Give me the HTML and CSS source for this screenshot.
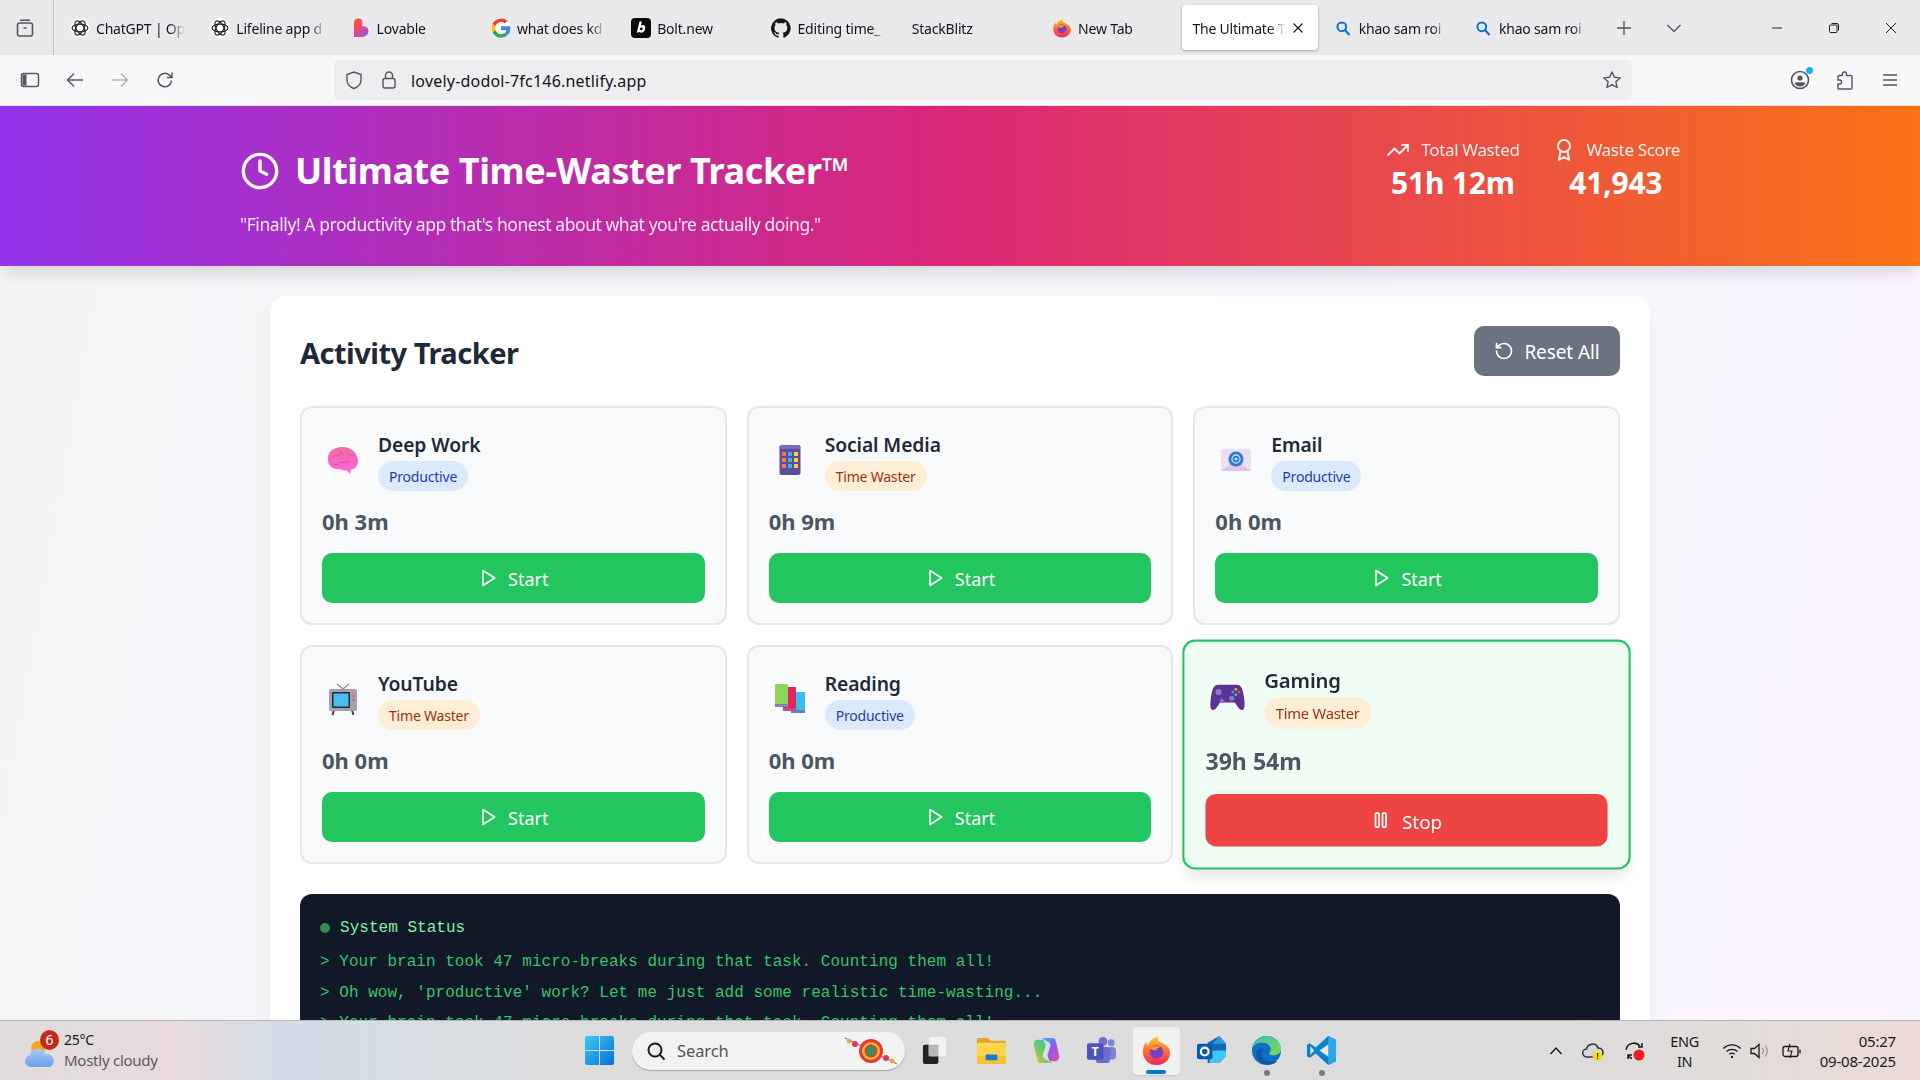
FILE: index.html
```html
<!DOCTYPE html>
<html lang="en">
<head>
<meta charset="utf-8">
<title>The Ultimate Time-Waster Tracker</title>
<link rel="stylesheet" href="styles.css">
</head>
<body>
<svg class="defs" width="0" height="0" aria-hidden="true">
  <defs>
    <symbol id="i-play" viewBox="0 0 24 24"><polygon points="6 3 20 12 6 21" fill="none" stroke="currentColor" stroke-width="2" stroke-linejoin="round"/></symbol>
    <symbol id="i-pause" viewBox="0 0 24 24"><g fill="none" stroke="currentColor" stroke-width="2"><rect x="6" y="4" width="4" height="16" rx="1"/><rect x="14" y="4" width="4" height="16" rx="1"/></g></symbol>
    <symbol id="i-knot" viewBox="0 0 24 24"><circle cx="12" cy="12" r="12" fill="#fff"/><g fill="none" stroke="currentColor" stroke-width="1.400"><ellipse cx="12" cy="12" rx="9.500" ry="4.600"/><ellipse cx="12" cy="12" rx="9.500" ry="4.600" transform="rotate(60 12 12)"/><ellipse cx="12" cy="12" rx="9.500" ry="4.600" transform="rotate(120 12 12)"/></g></symbol>
    <symbol id="i-lens" viewBox="0 0 20 20"><circle cx="8.800" cy="8.800" r="4.400" fill="none" stroke="#0b6fd6" stroke-width="2"/><path d="M12 12l4 4.400" stroke="#0b6fd6" stroke-width="2.200" stroke-linecap="round"/></symbol>
    <linearGradient id="g-fox" x1="0" y1="0" x2="0" y2="1"><stop offset="0" stop-color="#ffd02e"/><stop offset=".45" stop-color="#ff7a2a"/><stop offset="1" stop-color="#f0285a"/></linearGradient>
    <symbol id="i-fox" viewBox="0 0 32 32"><path d="M16 31C7.500 31 2 24.700 2 17c0-4 1.300-7.500 3.500-10 .1 1.800.7 3 1.700 3.800C8.500 6.500 12 3.500 17.500 1c-1 3.500.2 5.500 3 6.800C25.600 10 30 13 30 18c0 7.500-6 13-14 13z" fill="url(#g-fox)"/><circle cx="16" cy="17.500" r="7" fill="#7b3fc4"/><path d="M9 14c3-3 8-3.500 12-1.500-3 .2-4.500 1.500-5 3-2 .5-4.500 0-7-1.500z" fill="#ff9a2e"/></symbol>
  </defs>
</svg>

<div class="desktop">
  <div class="tabstrip">
    <div class="tab-manager">
      <svg viewBox="0 0 20 20" width="20" height="20" fill="none" stroke="#55555c" stroke-width="1.600"><rect x="2.500" y="5" width="15" height="13" rx="2"/><path d="M5 2.200h10M8.500 10h3"/></svg>
    </div>
    <div class="tabs">
      <div class="tab"><svg class="fav" viewBox="0 0 24 24" color="#222"><use href="#i-knot"/></svg><span class="tab-text">ChatGPT | Op</span></div>
      <div class="tab"><svg class="fav" viewBox="0 0 24 24" color="#222"><use href="#i-knot"/></svg><span class="tab-text">Lifeline app d</span></div>
      <div class="tab"><svg class="fav" viewBox="0 0 16 20"><defs><linearGradient id="g-lov" x1="0" y1="0" x2="1" y2="1"><stop offset="0" stop-color="#ff5a1f"/><stop offset=".5" stop-color="#f0408c"/><stop offset="1" stop-color="#6a6cf5"/></linearGradient></defs><path d="M1 5a4.500 4.500 0 0 1 8.400-2.300L9 8.500A4.800 4.800 0 0 1 15.500 13c0 3.500-3 6-6.500 6H1z" fill="url(#g-lov)"/></svg><span class="tab-text">Lovable</span></div>
      <div class="tab"><svg class="fav" viewBox="0 0 18 18"><circle cx="9" cy="9" r="9" fill="#fff"/><g transform="translate(-2.700 -2.700) scale(1.300)"><path d="M15.500 9.200c0-.5 0-1-.1-1.400H9v2.700h3.700c-.2.900-.6 1.600-1.300 2l2 1.600c1.300-1.100 2.100-2.800 2.100-4.900z" fill="#4285f4"/><path d="M9 15.800c1.800 0 3.300-.6 4.400-1.700l-2-1.600c-.6.400-1.400.6-2.400.6-1.800 0-3.300-1.200-3.800-2.800l-2.100 1.600c1.100 2.300 3.400 3.900 5.900 3.900z" fill="#34a853"/><path d="M5.200 10.300a4 4 0 0 1 0-2.600L3.100 6.100a6.700 6.700 0 0 0 0 5.800z" fill="#fbbc05"/><path d="M9 4.900c1 0 1.900.3 2.600 1l1.900-1.900A6.800 6.800 0 0 0 3.100 6.100l2.100 1.600C5.700 6.100 7.200 4.900 9 4.900z" fill="#ea4335"/></g></svg><span class="tab-text">what does kd</span></div>
      <div class="tab"><svg class="fav" viewBox="0 0 20 20"><rect width="20" height="20" rx="4" fill="#0a0a0a"/><path d="M8.500 3.500h2.300l-.9 4.200c.6-.5 1.300-.7 2-.7 1.700 0 2.600 1.300 2.300 3.400-.4 2.700-2 4.300-4.100 4.300-1 0-1.700-.4-2.100-1.100l-.2.900H5.800z" fill="#fff"/><circle cx="10.300" cy="10.800" r="1.400" fill="#0a0a0a"/></svg><span class="tab-text">Bolt.new</span></div>
      <div class="tab"><svg class="fav" viewBox="0 0 16 16"><path fill="#181717" d="M8 .2a8 8 0 0 0-2.500 15.600c.4.100.5-.2.500-.4v-1.400c-2.200.5-2.700-1-2.700-1-.4-.9-.9-1.200-.9-1.200-.7-.5.100-.5.100-.5.800.1 1.200.8 1.200.8.700 1.200 1.900.9 2.300.7.100-.5.300-.9.500-1.100-1.800-.2-3.700-.9-3.700-4 0-.9.300-1.600.8-2.100-.1-.2-.4-1 .1-2.100 0 0 .7-.2 2.200.8a7.600 7.600 0 0 1 4 0c1.500-1 2.200-.8 2.200-.8.400 1.100.2 1.900.1 2.100.5.600.8 1.300.8 2.100 0 3.100-1.900 3.700-3.700 3.900.3.300.6.800.6 1.500v2.200c0 .2.100.5.600.4A8 8 0 0 0 8 .2z"/></svg><span class="tab-text">Editing time_</span></div>
      <div class="tab"><span class="tab-text">StackBlitz</span></div>
      <div class="tab"><svg class="fav" viewBox="0 0 32 32"><use href="#i-fox"/></svg><span class="tab-text">New Tab</span></div>
      <div class="tab tab-active"><span class="tab-text">The Ultimate T</span><svg class="tab-close" viewBox="0 0 12 12" fill="none" stroke="#222" stroke-width="1.300"><path d="M1.500 1.500l9 9M10.500 1.500l-9 9"/></svg></div>
      <div class="tab"><svg class="fav" viewBox="0 0 20 20"><use href="#i-lens"/></svg><span class="tab-text">khao sam roi</span></div>
      <div class="tab"><svg class="fav" viewBox="0 0 20 20"><use href="#i-lens"/></svg><span class="tab-text">khao sam roi</span></div>
    </div>
    <svg class="strip-btn plus" viewBox="0 0 16 16" fill="none" stroke="#55555c" stroke-width="1.300"><path d="M8 1v14M1 8h14"/></svg>
    <svg class="strip-btn chev" viewBox="0 0 16 16" fill="none" stroke="#55555c" stroke-width="1.300"><path d="M1.500 5L8 11.500 14.500 5"/></svg>
    <div class="win-controls">
      <svg viewBox="0 0 12 12" fill="none" stroke="#222" stroke-width="1"><path d="M1 6h10"/></svg>
      <svg viewBox="0 0 12 12" fill="none" stroke="#222" stroke-width="1"><rect x="1.500" y="3" width="7.500" height="7.500" rx="1"/><path d="M3.500 1.500h5.500a1.500 1.500 0 0 1 1.500 1.500v5.500"/></svg>
      <svg viewBox="0 0 12 12" fill="none" stroke="#222" stroke-width="1"><path d="M1 1l10 10M11 1L1 11"/></svg>
    </div>
  </div>

  <div class="toolbar">
    <div class="nav-buttons">
      <svg viewBox="0 0 20 20" fill="none" stroke="#55555c" stroke-width="1.500"><rect x="1.500" y="3.500" width="17" height="13" rx="2"/><rect x="2.500" y="4.500" width="4" height="11" fill="#55555c" stroke="none"/></svg>
      <svg viewBox="0 0 20 20" fill="none" stroke="#55555c" stroke-width="1.500"><path d="M18 10H2.500M9 3.500L2.500 10 9 16.500"/></svg>
      <svg viewBox="0 0 20 20" fill="none" stroke="#b4b4b8" stroke-width="1.500"><path d="M2 10h15.500M11 3.500l6.500 6.500-6.500 6.500"/></svg>
      <svg viewBox="0 0 20 20" fill="none" stroke="#55555c" stroke-width="1.500"><path d="M16.500 10.500a6.700 6.700 0 1 1-2.200-5.400L17 7.500"/><path d="M17 2.500v5h-5"/></svg>
    </div>
    <div class="urlbar">
      <svg class="url-icon" viewBox="0 0 20 20" fill="none" stroke="#55555c" stroke-width="1.400"><path d="M10 2l7 2.500v5.500c0 4-3 7-7 8.500-4-1.500-7-4.500-7-8.500V4.500z"/></svg>
      <svg class="url-icon" viewBox="0 0 20 20" fill="none" stroke="#55555c" stroke-width="1.400"><rect x="4" y="8.500" width="12" height="9.500" rx="2"/><path d="M6.500 8.500V5.500a3.500 3.500 0 0 1 7 0v3"/></svg>
      <span class="url-text">lovely-dodol-7fc146.netlify.app</span>
      <svg class="url-star" viewBox="0 0 20 20" fill="none" stroke="#55555c" stroke-width="1.400" stroke-linejoin="round"><path d="M10 2l2.400 5.300 5.800.6-4.300 3.900 1.200 5.700L10 14.600l-5.100 2.900 1.200-5.700L1.800 7.900l5.800-.6z"/></svg>
    </div>
    <div class="tool-right">
      <div class="account">
        <svg viewBox="0 0 20 20" width="20" height="20"><circle cx="10" cy="10" r="8.500" fill="none" stroke="#55555c" stroke-width="1.600"/><circle cx="10" cy="8" r="2.600" fill="#55555c"/><path d="M4.500 13c2-1 9-1 11 0-1.200 2.500-3 3.500-5.500 3.500S5.700 15.500 4.500 13z" fill="#55555c"/></svg>
        <span class="account-dot"></span>
      </div>
      <svg viewBox="0 0 20 20" width="20" height="20" fill="none" stroke="#55555c" stroke-width="1.400"><path d="M7.500 5.500V4a2 2 0 0 1 4 0v1.500H16a1 1 0 0 1 1 1V18a1 1 0 0 1-1 1H4a1 1 0 0 1-1-1v-4h1.500a2 2 0 0 0 0-4H3V6.500a1 1 0 0 1 1-1z"/></svg>
      <svg viewBox="0 0 20 20" width="20" height="20" fill="none" stroke="#55555c" stroke-width="1.500"><path d="M3 5h14M3 10h14M3 15h14"/></svg>
    </div>
  </div>

  <div class="viewport">
    <header class="hero">
      <div class="hero-inner">
        <div class="hero-left">
          <h1 class="hero-title">
            <svg class="hero-clock" viewBox="0 0 24 24" fill="none" stroke="currentColor" stroke-width="2" stroke-linecap="round" stroke-linejoin="round"><circle cx="12" cy="12" r="10"/><polyline points="12 6 12 12 16 14"/></svg>
            Ultimate Time-Waster Tracker™
          </h1>
          <p class="hero-sub">"Finally! A productivity app that's honest about what you're actually doing."</p>
        </div>
        <div class="hero-stats">
          <div class="stat">
            <div class="stat-label"><svg viewBox="0 0 24 24" fill="none" stroke="currentColor" stroke-width="2" stroke-linecap="round" stroke-linejoin="round"><polyline points="22 7 13.500 15.500 8.500 10.500 2 17"/><polyline points="16 7 22 7 22 13"/></svg>Total Wasted</div>
            <div class="stat-value">51h 12m</div>
          </div>
          <div class="stat">
            <div class="stat-label"><svg viewBox="0 0 24 24" fill="none" stroke="currentColor" stroke-width="2" stroke-linecap="round" stroke-linejoin="round"><circle cx="12" cy="8" r="6"/><path d="M15.477 12.890L17 22l-5-3-5 3 1.523-9.110"/></svg>Waste Score</div>
            <div class="stat-value">41,943</div>
          </div>
        </div>
      </div>
    </header>

    <main class="panel">
      <div class="panel-head">
        <h2 class="panel-title">Activity Tracker</h2>
        <div class="btn-reset"><svg viewBox="0 0 24 24" fill="none" stroke="currentColor" stroke-width="2" stroke-linecap="round" stroke-linejoin="round"><path d="M3 12a9 9 0 1 0 9-9 9.750 9.750 0 0 0-6.740 2.740L3 8"/><path d="M3 3v5h5"/></svg>Reset All</div>
      </div>

      <div class="grid">
        <article class="card">
          <div class="card-head">
            <svg class="emoji" viewBox="0 0 44 44"><defs><linearGradient id="g-brain" x1="0" y1="0" x2="0" y2="1"><stop offset="0" stop-color="#ee6ea2"/><stop offset="1" stop-color="#ff62dc"/></linearGradient></defs><path d="M7 22C6 14 13 9 21 9c9 0 16 6 16 14 0 5-3 8-7 8.500L29 36l-3-3.500c-4 .5-6-1.500-9-1.500-5 0-9.500-2.500-10-9z" fill="url(#g-brain)"/><path d="M12 19c3-3 6-1 8-3M18 25c4-2 7 1 11-2M26 14c1 3 4 3 6 4M12 26c2 1 4 0 6 1M20 12c-1 3 1 4 3 5" fill="none" stroke="#d9488f" stroke-width=".9"/></svg>
            <div class="card-meta">
              <div class="card-name">Deep Work</div>
              <span class="badge badge-good">Productive</span>
            </div>
          </div>
          <div class="card-time">0h 3m</div>
          <div class="btn btn-start"><svg><use href="#i-play"/></svg>Start</div>
        </article>

        <article class="card">
          <div class="card-head">
            <svg class="emoji" viewBox="0 0 44 44"><rect x="11.500" y="7" width="21" height="30" rx="2.500" fill="#5e4b9c"/><path d="M11.500 11V9.500A2.500 2.500 0 0 1 14 7h16a2.500 2.500 0 0 1 2.500 2.500V11z" fill="#7a6ac0"/><g fill="#f27a3d"><rect x="14" y="14" width="4" height="4" rx=".6"/><rect x="14" y="20" width="4" height="4" rx=".6"/><rect x="14" y="26" width="4" height="4" rx=".6"/></g><g fill="#2fb8ef"><rect x="20" y="14" width="4" height="4" rx=".6"/><rect x="20" y="20" width="4" height="4" rx=".6"/><rect x="20" y="26" width="4" height="4" rx=".6"/></g><g fill="#fbd23e"><rect x="26" y="14" width="4" height="4" rx=".6"/><rect x="26" y="20" width="4" height="4" rx=".6"/><rect x="26" y="26" width="4" height="4" rx=".6"/></g></svg>
            <div class="card-meta">
              <div class="card-name">Social Media</div>
              <span class="badge badge-bad">Time Waster</span>
            </div>
          </div>
          <div class="card-time">0h 9m</div>
          <div class="btn btn-start"><svg><use href="#i-play"/></svg>Start</div>
        </article>

        <article class="card">
          <div class="card-head">
            <svg class="emoji" viewBox="0 0 44 44"><rect x="7" y="11" width="30" height="22" rx="1.500" fill="#ecdff2"/><path d="M7 33l15-11 15 11z" fill="#dcc8ea"/><circle cx="22" cy="21" r="7.500" fill="#2f78cf"/><circle cx="22" cy="21" r="4" fill="none" stroke="#bfe0ff" stroke-width="1.300"/><circle cx="22" cy="21" r="1.600" fill="#bfe0ff"/></svg>
            <div class="card-meta">
              <div class="card-name">Email</div>
              <span class="badge badge-good">Productive</span>
            </div>
          </div>
          <div class="card-time">0h 0m</div>
          <div class="btn btn-start"><svg><use href="#i-play"/></svg>Start</div>
        </article>

        <article class="card">
          <div class="card-head">
            <svg class="emoji" viewBox="0 0 44 44"><path d="M16 7l6 5 6-5" fill="none" stroke="#8a8a94" stroke-width="1.200"/><path d="M13 33l-1.500 5M31 33l1.500 5" stroke="#45404c" stroke-width="2"/><rect x="8" y="12" width="28" height="22" rx="2" fill="#a79eae"/><rect x="11" y="15" width="18" height="16" rx="1" fill="#2a2a32"/><rect x="12.500" y="16.500" width="15" height="13" fill="#49bdf0"/><circle cx="32.500" cy="19" r="1.300" fill="#e85d7b"/><circle cx="32.500" cy="23" r="1" fill="#6f6877"/></svg>
            <div class="card-meta">
              <div class="card-name">YouTube</div>
              <span class="badge badge-bad">Time Waster</span>
            </div>
          </div>
          <div class="card-time">0h 0m</div>
          <div class="btn btn-start"><svg><use href="#i-play"/></svg>Start</div>
        </article>

        <article class="card">
          <div class="card-head">
            <svg class="emoji" viewBox="0 0 44 44"><rect x="23" y="15" width="14" height="21" fill="#38bdf0"/><rect x="23" y="33" width="14" height="3" fill="#6a7ac8"/><rect x="15" y="10" width="13" height="24" fill="#e0265f"/><rect x="15" y="31" width="13" height="3" fill="#c84a8a"/><rect x="7" y="7" width="13" height="23" rx="1" fill="#8fd45a"/><rect x="7" y="27" width="13" height="3" fill="#7a86a8"/></svg>
            <div class="card-meta">
              <div class="card-name">Reading</div>
              <span class="badge badge-good">Productive</span>
            </div>
          </div>
          <div class="card-time">0h 0m</div>
          <div class="btn btn-start"><svg><use href="#i-play"/></svg>Start</div>
        </article>

        <article class="card card-active">
          <div class="card-head">
            <svg class="emoji" viewBox="0 0 44 44"><path d="M13 11h18c4 0 5.500 4 6.500 10.500S39 34 36.500 35c-3 1-5.500-4.500-7.500-7H15c-2 2.500-4.500 8-7.500 7C5 34 5.500 28 6.500 21.500S9 11 13 11z" fill="#5b3393"/><g fill="#8d74cf"><circle cx="13.500" cy="18" r="3"/><circle cx="26" cy="24" r="2.500"/><path d="M16 24h1.500v1.500H19V27h-1.500v1.500H16V27h-1.500v-1.500H16z"/></g><circle cx="33" cy="18" r="1.300" fill="#f0463f"/><circle cx="30" cy="15.500" r="1.300" fill="#f5b731"/><circle cx="30" cy="20.500" r="1.300" fill="#2fd3a2"/><circle cx="27" cy="18" r="1.300" fill="#3f9bf0"/></svg>
            <div class="card-meta">
              <div class="card-name">Gaming</div>
              <span class="badge badge-bad">Time Waster</span>
            </div>
          </div>
          <div class="card-time">39h 54m</div>
          <div class="btn btn-stop"><svg><use href="#i-pause"/></svg>Stop</div>
        </article>
      </div>

      <section class="terminal">
        <div class="term-head"><span class="term-dot"></span>System Status</div>
        <div class="term-line">&gt; Your brain took 47 micro-breaks during that task. Counting them all!</div>
        <div class="term-line">&gt; Oh wow, 'productive' work? Let me just add some realistic time-wasting...</div>
        <div class="term-line">&gt; Your brain took 47 micro-breaks during that task. Counting them all!</div>
      </section>
    </main>
  </div>

  <footer class="taskbar">
    <div class="weather">
      <div class="weather-icon">
        <svg viewBox="0 0 32 32" width="32" height="32"><defs><linearGradient id="g-cloud" x1="0" y1="0" x2="0" y2="1"><stop offset="0" stop-color="#a9c9f5"/><stop offset="1" stop-color="#6d9fe8"/></linearGradient></defs><circle cx="14" cy="10" r="7" fill="#f5a623"/><path d="M7 29a6 6 0 0 1-1-11.900 8 8 0 0 1 15.500-.6A6.300 6.300 0 0 1 25 29z" fill="url(#g-cloud)"/></svg>
        <span class="weather-badge">6</span>
      </div>
      <div class="weather-text">
        <div class="wt-temp">25°C</div>
        <div class="wt-desc">Mostly cloudy</div>
      </div>
    </div>

    <div class="task-center">
      <svg class="win-logo" viewBox="0 0 30 30"><defs><linearGradient id="g-win" x1="0" y1="0" x2="1" y2="1"><stop offset="0" stop-color="#3cc8f4"/><stop offset="1" stop-color="#0670d6"/></linearGradient></defs><path d="M0 2a2 2 0 0 1 2-2h12.500v14.500H0zM15.500 0H28a2 2 0 0 1 2 2v12.500H15.500zM0 15.500h14.500V30H2a2 2 0 0 1-2-2zM15.500 15.500H30V28a2 2 0 0 1-2 2H15.500z" fill="url(#g-win)"/></svg>
      <div class="search">
        <svg viewBox="0 0 20 20" width="20" height="20" fill="none" stroke="#1a1a1a" stroke-width="2"><circle cx="9" cy="9" r="6.500"/><path d="M14 14l4.500 4.500"/></svg>
        <span class="search-text">Search</span>
        <svg class="rakhi" viewBox="0 0 54 30"><path d="M1 2l52 26" stroke="#7a4fb0" stroke-width="1"/><circle cx="5" cy="5" r="2.400" fill="#f0a23c"/><circle cx="11" cy="8" r="3" fill="#f0305a"/><circle cx="42" cy="22" r="3" fill="#f0305a"/><circle cx="48" cy="25" r="2.400" fill="#f0a23c"/><circle cx="27" cy="15" r="12" fill="#e8372f"/><circle cx="27" cy="15" r="9" fill="#f5b93a"/><circle cx="27" cy="15" r="6.500" fill="#e8372f"/><ellipse cx="27" cy="15" rx="4" ry="5" fill="#18a06a"/></svg>
      </div>
      <svg class="taskview" viewBox="0 0 24 28"><rect x="0" y="8" width="16" height="20" rx="2" fill="#222"/><rect x="6" y="0" width="18" height="20" rx="2" fill="#f2f2f2" opacity=".95"/><rect x="6" y="8" width="10" height="12" fill="#b8b8b8"/></svg>
      <div class="apps">
        <svg class="app" viewBox="0 0 32 32"><path d="M1 5a2 2 0 0 1 2-2h9l3 3h14a2 2 0 0 1 2 2v4H1z" fill="#e2a52a"/><rect x="1" y="8" width="30" height="22" rx="2" fill="#fcd64c"/><rect x="1" y="22" width="30" height="8" fill="#f7c132"/><rect x="10" y="20" width="12" height="6" rx="1" fill="#0f7fd6"/></svg>
        <svg class="app" viewBox="0 0 32 32"><defs><linearGradient id="g-cop1" x1="0" y1="0" x2="1" y2="1"><stop offset="0" stop-color="#36c3e8"/><stop offset=".5" stop-color="#8b5cf6"/><stop offset="1" stop-color="#ec4899"/></linearGradient><linearGradient id="g-cop2" x1="0" y1="1" x2="1" y2="0"><stop offset="0" stop-color="#f9c22e"/><stop offset=".5" stop-color="#5ecb6b"/><stop offset="1" stop-color="#36b3e8"/></linearGradient></defs><path d="M11 3h11c2 0 3 1 3.500 3L29 21c1 3-1 6-4 6h-6l-2-6 3-10c.5-2-1-4-3-4z" fill="url(#g-cop1)"/><path d="M21 29H10c-2 0-3-1-3.500-3L3 11c-1-3 1-6 4-6h6l2 6-3 10c-.5 2 1 4 3 4z" fill="url(#g-cop2)"/></svg>
        <svg class="app" viewBox="0 0 32 32"><circle cx="26" cy="8" r="3.500" fill="#7b83d8"/><rect x="21" y="12.500" width="10" height="13" rx="4" fill="#7b83d8"/><circle cx="17.500" cy="6.500" r="4.500" fill="#6a70c8"/><rect x="10" y="12" width="15" height="17" rx="4" fill="#6a70c8"/><rect x="1" y="8.500" width="17" height="17" rx="2" fill="#4b53bc"/><text class="teams-t" x="9.500" y="21.500">T</text></svg>
        <div class="app-tile"><svg class="app" viewBox="0 0 32 32"><use href="#i-fox"/></svg><span class="app-active"></span></div>
        <svg class="app" viewBox="0 0 32 32"><path d="M12 8L24 1l7 8v13l-7 7H12z" fill="#0f6cbd"/><path d="M24 1l7 8H18z" fill="#2f9ce0"/><path d="M14 16h17v6l-7 7H14z" fill="#3cc8f4"/><rect x="1" y="9" width="16" height="16" rx="2" fill="#0a5ca8"/><circle cx="9" cy="17" r="4" fill="none" stroke="#fff" stroke-width="2.200"/></svg>
        <div class="app-wrap"><svg class="app" viewBox="0 0 32 32"><defs><linearGradient id="g-edge" x1="0" y1="0" x2="1" y2="1"><stop offset="0" stop-color="#35c1b1"/><stop offset="1" stop-color="#7ed957"/></linearGradient></defs><circle cx="16" cy="16" r="15" fill="#0f6fc6"/><path d="M1.500 14C3 6 9 1 16 1c8 0 15 6 15 13.500 0 4-3.500 6.500-7.500 6.500-3 0-5-1-5-2 0-.5 2-1.500 2-4 0-4-4-7-8.500-7C7 8 3 10 1.500 14z" fill="url(#g-edge)"/><path d="M13 15c-3 2-3 7 0 10 2 2 6 3 11 2 2-.5 3 0 2 1-3 2.500-9 3.500-14 1.500C7 27 4 22 6 17c2-3 5-4 7-2z" fill="#0c56a8"/></svg><span class="app-dot"></span></div>
        <div class="app-wrap"><svg class="app" viewBox="0 0 32 32"><path d="M23 1l8 4v22l-8 4-13-12-6 4.500-3-1.500v-12l3-1.500 6 4.500z" fill="#0a82d0"/><path d="M23 1v30l8-4V5z" fill="#2ba5ee"/><path d="M23 9.500L14 16l9 6.500z" fill="#e8e8e8"/><path d="M4.500 11.500L8.500 16l-4 4.500z" fill="#e8e8e8"/></svg><span class="app-dot"></span></div>
      </div>
    </div>

    <div class="tray">
      <svg class="tray-caret" viewBox="0 0 14 14" fill="none" stroke="#1a1a1a" stroke-width="1.400"><path d="M1.500 10L7 4l5.500 6"/></svg>
      <div class="tray-cloud">
        <svg viewBox="0 0 22 22" width="22" height="22"><path d="M5 17a4 4 0 0 1-.5-8A6 6 0 0 1 16 8a4.500 4.500 0 0 1 1 9z" fill="#d8d8d8" stroke="#333" stroke-width="1.500"/><circle cx="15.500" cy="16" r="5" fill="#f8dc1c"/><rect x="15" y="13" width="1.200" height="4" fill="#222"/><rect x="15" y="17.800" width="1.200" height="1.200" fill="#222"/></svg>
      </div>
      <svg class="tray-sync" viewBox="0 0 24 24" fill="none" stroke="#1a1a1a" stroke-width="1.500"><path d="M4 11a8 8 0 0 1 14-4M20 4v4h-4M6 20v-4h4M6 16a8 8 0 0 0 4 3.500"/><circle cx="17" cy="16" r="5.500" fill="#ee1c25" stroke="none"/></svg>
      <div class="tray-lang"><span>ENG</span><span>IN</span></div>
      <div class="tray-icons">
        <svg viewBox="0 0 20 20" width="20" height="20" fill="none" stroke="#1a1a1a" stroke-width="1.300"><path d="M1.500 7.500a12 12 0 0 1 17 0M4.500 10.500a8 8 0 0 1 11 0M7.300 13.300a4 4 0 0 1 5.400 0"/><circle cx="10" cy="16" r="1.200" fill="#1a1a1a" stroke="none"/></svg>
        <svg viewBox="0 0 22 20" width="22" height="20" fill="none" stroke="#1a1a1a" stroke-width="1.300"><path d="M2 7.500h3.500L10 3.500v13l-4.500-4H2z"/><path d="M13 7a4 4 0 0 1 0 6M16 4.500a8 8 0 0 1 0 11" stroke="#999"/></svg>
        <svg class="tray-batt" viewBox="0 0 22 20" width="22" height="20" fill="none" stroke="#1a1a1a" stroke-width="1.300"><rect x="2" y="5.500" width="15" height="10" rx="2"/><path d="M19 8.500v4"/><path d="M9 3L7 10h4l-2 7" stroke-width="1.100"/></svg>
      </div>
      <div class="clock"><span>05:27</span><span>09-08-2025</span></div>
    </div>
  </footer>
</div>
</body>
</html>
```

FILE: styles.css
```css
* { box-sizing: border-box; }
html, body { margin: 0; padding: 0; height: 100%; overflow: hidden; }
body { font-family: "Noto Sans", "Open Sans", sans-serif; color: #1f2937; }
.defs { position: absolute; }

.desktop { width: 1920px; height: 1080px; display: flex; flex-direction: column; overflow: hidden; }

/* Browser tab strip */
.tabstrip { height: 55px; flex: none; background: #eaeaed; display: flex; align-items: center; }
.tab-manager { width: 54px; height: 55px; padding-right: 4px; border-right: 1px solid #c4c4c8; display: flex; align-items: center; justify-content: center; flex: none; }
.tabs { display: flex; gap: 5px; padding-left: 6px; flex: none; }
.tab { width: 135.300px; height: 45px; padding: 1px 10px 0; display: flex; align-items: center; gap: 6px; font-size: 14px; letter-spacing: -.2px; color: #15141a; flex: none; }
.fav { width: 20px; height: 20px; flex: none; }
.tab-text { flex: 1; min-width: 0; white-space: nowrap; overflow: hidden; -webkit-mask-image: linear-gradient(90deg, #000 82%, transparent); mask-image: linear-gradient(90deg, #000 82%, transparent); }
.tab-active { background: #fff; border-radius: 4px; padding-right: 14px; box-shadow: 0 1px 3px rgba(0,0,0,.3); }
.tab-close { width: 12px; height: 12px; flex: none; }
.strip-btn { width: 16px; height: 16px; flex: none; }
.plus { margin-left: 18px; }
.chev { margin-left: 34px; }
.win-controls { margin-left: auto; display: flex; gap: 45px; padding-right: 23px; }
.win-controls svg { width: 12px; height: 12px; }

/* Browser toolbar */
.toolbar { height: 51px; flex: none; background: #f9f9fb; border-bottom: 1px solid #e4e4e8; display: flex; align-items: center; padding: 0 20px; }
.nav-buttons { display: flex; gap: 25px; width: 314px; flex: none; }
.nav-buttons svg { width: 20px; height: 20px; }
.urlbar { width: 1298px; height: 40px; background: #eeeef0; border-radius: 5px; display: flex; align-items: center; padding: 0 10px; flex: none; gap: 15px; }
.url-icon { width: 20px; height: 20px; flex: none; }
.url-text { font-size: 16px; letter-spacing: .2px; color: #15141a; margin-left: -3px; padding-top: 2px; }
.url-star { width: 20px; height: 20px; margin-left: auto; }
.tool-right { display: flex; gap: 25px; margin-left: 158px; align-items: center; }
.account { position: relative; width: 20px; height: 20px; }
.account-dot { position: absolute; width: 7px; height: 7px; border-radius: 50%; background: #14b1f5; top: -3px; right: -3px; }

/* Page viewport */
.viewport { flex: 1; min-height: 0; overflow: hidden; background: linear-gradient(100deg, #f4f4f7 0%, #f6f5f9 50%, #faf5ff 100%); }
.hero { height: 160px; background: linear-gradient(90deg, #9333ea, #db2777 50%, #f97316); color: #fff; box-shadow: 0 10px 15px -3px rgba(0,0,0,.12); }
.hero-inner { width: 1440px; margin: 0 auto; display: flex; justify-content: space-between; align-items: flex-start; }
.hero-left { padding-top: 38px; }
.hero-title { margin: 0; font-size: 36px; line-height: 54px; font-weight: 700; display: flex; align-items: center; gap: 15px; letter-spacing: -.4px; }
.hero-clock { width: 40px; height: 40px; flex: none; }
.hero-sub { margin: 13px 0 0; font-size: 17.500px; line-height: 27px; opacity: .9; letter-spacing: -.43px; }
.hero-stats { display: flex; gap: 32px; padding-top: 30px; }
.stat { display: flex; flex-direction: column; align-items: center; }
.stat-label { display: flex; align-items: center; gap: 11px; font-size: 17px; line-height: 27px; opacity: .9; letter-spacing: -.35px; }
.stat-label svg { width: 24px; height: 24px; flex: none; }
.stat-value { font-size: 30px; line-height: 40px; font-weight: 700; letter-spacing: -.2px; }

/* Main panel */
.panel { width: 1380px; margin: 30px auto 0; padding: 30px; background: #fff; border-radius: 16px; box-shadow: 0 10px 25px -5px rgba(0,0,0,.06); }
.panel-head { display: flex; justify-content: space-between; align-items: center; margin-bottom: 30px; height: 50px; }
.panel-title { margin: 0; padding-top: 2px; font-size: 29px; font-weight: 700; color: #1f2937; letter-spacing: -.5px; }
.btn-reset { width: 146px; height: 50px; padding-top: 2px; border-radius: 10px; background: #6b7280; color: #fff; display: flex; align-items: center; justify-content: center; gap: 10px; font-size: 19px; letter-spacing: -.1px; }
.btn-reset svg { width: 20px; height: 20px; flex: none; margin-top: -2px; }

.grid { display: grid; grid-template-columns: repeat(3, 1fr); gap: 20px; }
.card { height: 219px; padding: 20px; background: #f9fafb; border: 2px solid #e5e7eb; border-radius: 12px; display: flex; flex-direction: column; }
.card-active { background: #f0fdf4; border-color: #22c55e; transform: scale(1.05); box-shadow: 0 10px 15px -3px rgba(0,0,0,.1); }
.card-head { display: flex; gap: 12px; align-items: center; }
.emoji { width: 44px; height: 44px; flex: none; margin: 0 1px 0 -1px; }
.card-meta { display: flex; flex-direction: column; align-items: flex-start; }
.card-name { font-size: 19.300px; line-height: 33px; font-weight: 600; color: #1f2937; letter-spacing: -.1px; }
.badge { height: 30px; padding: 0 11px; border-radius: 15px; font-size: 14px; line-height: 31px; letter-spacing: -.2px; }
.badge-good { background: #dbeafe; color: #1e40af; }
.badge-bad { background: #ffedd5; color: #9a3412; }
.card-time { margin-top: 15px; font-size: 22px; line-height: 30px; font-weight: 700; color: #4b5563; }
.btn { margin-top: 17px; height: 50px; padding-top: 2px; border-radius: 10px; color: #fff; display: flex; align-items: center; justify-content: center; gap: 10px; font-size: 18px; }
.btn svg { width: 20px; height: 20px; flex: none; margin-top: -2px; }
.btn-start { background: #22c55e; }
.btn-stop { background: #ef4444; }

/* Terminal */
.terminal { margin-top: 30px; padding: 20px; background: #111827; border-radius: 12px; font-family: "Liberation Mono", monospace; font-size: 16px; letter-spacing: .03px; color: #4ade80; }
.term-head { display: flex; align-items: center; gap: 10px; height: 28px; color: #86efac; margin-bottom: 5px; }
.term-dot { width: 10px; height: 10px; border-radius: 50%; background: #2f8a57; }
.term-line { line-height: 30.500px; color: #34c46c; }

/* Taskbar */
.taskbar { height: 60px; flex: none; border-top: 1px solid #b9b9b9; display: flex; align-items: center; background: linear-gradient(90deg, #dfdcdc 0%, #e8dadd 9%, #d1dde8 15%, #d9dde0 24%, #dcdcdc 32%, #dddddd 75%, #e0dcda 90%, #eddad6 100%); }
.weather { display: flex; gap: 7px; padding-left: 24px; width: 585px; flex: none; align-items: center; }
.weather-icon { position: relative; width: 33px; height: 38px; display: flex; align-items: flex-end; }
.weather-badge { position: absolute; left: 16px; top: -2px; width: 19px; height: 20px; border-radius: 50%; background: #c42b1c; color: #fff; font-size: 14px; line-height: 20px; text-align: center; }
.weather-text { font-size: 15px; line-height: 20px; letter-spacing: -.25px; margin-top: -2px; }
.wt-temp { color: #1a1a1a; font-size: 14px; }
.wt-desc { color: #5c5c5c; }
.task-center { display: flex; align-items: center; flex: none; }
.win-logo { width: 29px; height: 29px; flex: none; }
.search { width: 273px; height: 38px; margin-left: 18px; border-radius: 19px; background: #f3f3f3; box-shadow: 0 1px 1px rgba(0,0,0,.25); display: flex; align-items: center; padding-left: 14px; gap: 11px; }
.search-text { font-size: 16.500px; color: #555; letter-spacing: -.1px; }
.rakhi { width: 54px; height: 30px; margin-left: auto; margin-right: 7px; }
.taskview { width: 27px; height: 27px; margin-left: 16px; flex: none; }
.apps { display: flex; align-items: center; gap: 24px; margin-left: 28px; }
.app { width: 31px; height: 31px; display: block; }
.app-tile { width: 47px; height: 48px; margin: 0 -8px; background: #f1f1f1; border-radius: 4px; display: flex; align-items: center; justify-content: center; position: relative; box-shadow: 0 1px 1px rgba(0,0,0,.1); }
.app-active { position: absolute; left: 13px; bottom: 1px; width: 20px; height: 4px; border-radius: 2px; background: #0078d4; }
.app-wrap { position: relative; }
.app-dot { position: absolute; left: 13px; bottom: -10px; width: 6px; height: 6px; border-radius: 50%; background: #7a7a7a; }
.teams-t { fill: #fff; font-size: 13px; font-weight: 700; text-anchor: middle; }
.tray { margin-left: auto; display: flex; align-items: center; padding-right: 24px; }
.tray-caret { width: 14px; height: 14px; }
.tray-cloud { margin-left: 19px; width: 22px; height: 22px; }
.tray-sync { width: 24px; height: 24px; margin-left: 18px; }
.tray-lang { width: 50px; margin-left: 14px; display: flex; flex-direction: column; align-items: center; font-size: 14.500px; line-height: 20px; color: #1a1a1a; letter-spacing: -.2px; }
.tray-icons { display: flex; align-items: center; gap: 7px; margin-left: 12px; }
.tray-batt { margin-left: 3px; }
.clock { margin-left: 17px; display: flex; flex-direction: column; align-items: flex-end; font-size: 15px; line-height: 20px; color: #1a1a1a; letter-spacing: -.2px; }
```
